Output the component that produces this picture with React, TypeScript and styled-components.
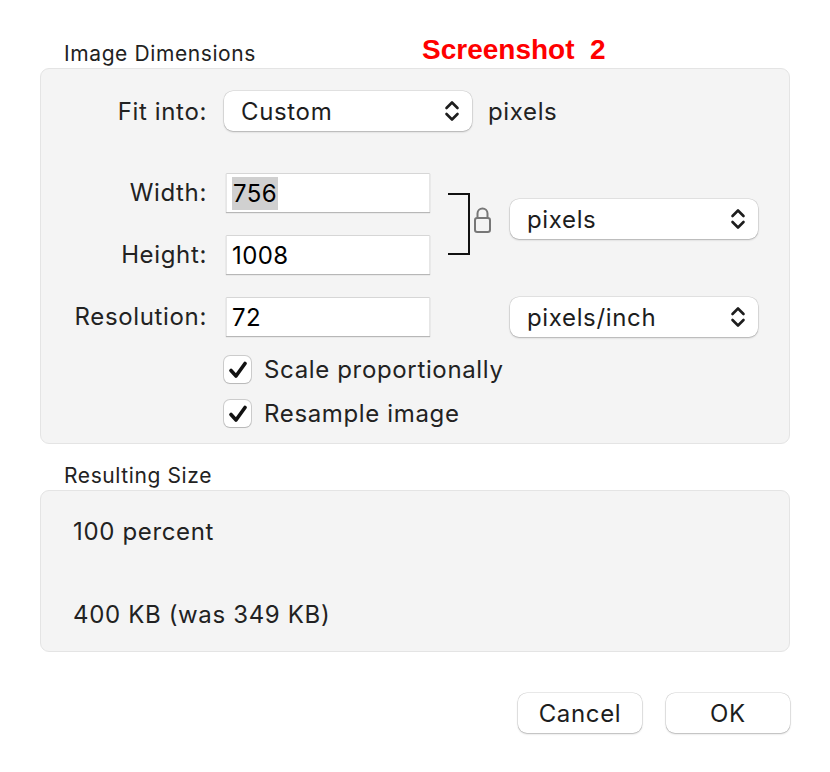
import React from "react";
import styled, { createGlobalStyle } from "styled-components";

const Global = createGlobalStyle`
  html, body { margin: 0; padding: 0; background: #ffffff; }
  body { font-family: Inter, "Noto Sans", sans-serif; color: #222222; }
`;

const Dialog = styled.div`
  width: 830px;
  height: 772px;
  padding: 0 40px;
  box-sizing: border-box;
  display: flex;
  flex-direction: column;
`;

const HeaderRow = styled.div`
  height: 68px;
  display: flex;
  align-items: flex-end;
  position: relative;
`;

const SectionLabel = styled.div`
  font-size: 21px;
  letter-spacing: 0.6px;
  padding-left: 24px;
  padding-bottom: 2px;
  color: #222;
`;

const Caption = styled.div`
  position: absolute;
  left: 382px;
  top: 34px;
  font-family: "Liberation Sans", Arial, sans-serif;
  font-weight: bold;
  font-size: 28px;
  color: #ff0000;
  white-space: pre;
`;

const Panel = styled.div<{ $h: number }>`
  height: ${(p) => p.$h}px;
  box-sizing: border-box;
  background: #f4f4f4;
  border: 1px solid #e4e4e4;
  border-radius: 9px;
`;

const DimPanel = styled(Panel)`
  padding-top: 22px;
  display: flex;
  flex-direction: column;
`;

const FitRow = styled.div`
  display: flex;
  align-items: center;
  height: 40px;
`;

const Label = styled.div`
  width: 166px;
  text-align: right;
  font-size: 24px;
  letter-spacing: 0.65px;
  color: #222;
  flex: none;
`;

const FitGap = styled.div`
  width: 17px;
  flex: none;
`;

const Popup = styled.div<{ $w: number }>`
  width: ${(p) => p.$w}px;
  height: 40px;
  box-sizing: border-box;
  background: #ffffff;
  border-radius: 9px;
  box-shadow: 0 0 0 0.5px rgba(0, 0, 0, 0.14), 0 1px 2px rgba(0, 0, 0, 0.22);
  display: flex;
  align-items: center;
  justify-content: space-between;
  padding: 0 12px 0 17px;
  font-size: 24px;
  letter-spacing: 0.65px;
  color: #1d1d1d;
  flex: none;
`;

const Unit = styled.div`
  margin-left: 16px;
  font-size: 24px;
  letter-spacing: 0.65px;
  color: #222;
`;

const SizeGrid = styled.div`
  margin-top: 42px;
  display: grid;
  grid-template-columns: 166px 17px 206px 80px 248px;
  grid-template-rows: 39px 39px 39px;
  row-gap: 23px;
  align-items: center;
`;

const GridLabel = styled(Label)<{ $row: number }>`
  grid-column: 1;
  grid-row: ${(p) => p.$row};
`;

const Field = styled.div<{ $row: number }>`
  grid-column: 3;
  grid-row: ${(p) => p.$row};
  margin-left: 2px;
  height: 39px;
  box-sizing: border-box;
  background: #ffffff;
  border-top: 1px solid #d6d6d6;
  border-left: 1px solid #e6e6e6;
  border-right: 1px solid #e6e6e6;
  box-shadow: 0 1px 1px rgba(0, 0, 0, 0.25);
  display: flex;
  align-items: center;
  padding-left: 5px;
  font-size: 24px;
  letter-spacing: 0.4px;
  color: #000;
`;

const Selected = styled.span`
  background: #d0d0d0;
  padding: 2px 1px;
`;

const LinkArea = styled.div`
  grid-column: 4;
  grid-row: 1 / 3;
  display: flex;
  align-items: center;
`;

const Bracket = styled.div`
  margin-left: 18px;
  width: 20px;
  height: 58px;
  border: 2px solid #111;
  border-left: none;
`;

const LockIcon = styled.svg`
  margin-left: 3px;
  margin-top: -7px;
`;

const SidePopup = styled.div<{ $row: string; $top: number }>`
  grid-column: 5;
  grid-row: ${(p) => p.$row};
  align-self: start;
  margin-top: ${(p) => p.$top}px;
`;

const Checks = styled.div`
  margin-top: 20px;
  margin-left: 183px;
  display: flex;
  flex-direction: column;
  gap: 17px;
`;

const CheckRow = styled.label`
  display: flex;
  align-items: center;
  gap: 13px;
  font-size: 24px;
  letter-spacing: 0.65px;
  color: #222;
  height: 27px;
`;

const Box = styled.span`
  width: 27px;
  height: 27px;
  box-sizing: border-box;
  border-radius: 6px;
  background: #ffffff;
  box-shadow: 0 0 0 1px rgba(0, 0, 0, 0.16), 0 1px 1px rgba(0, 0, 0, 0.1);
  display: flex;
  align-items: center;
  justify-content: center;
`;

const ResultHeader = styled.div`
  height: 46px;
  display: flex;
  align-items: flex-end;
`;

const ResultPanel = styled(Panel)`
  padding: 0 0 0 32px;
  display: flex;
  flex-direction: column;
`;

const ResultText = styled.div<{ $top: number }>`
  margin-top: ${(p) => p.$top}px;
  font-size: 24px;
  letter-spacing: 0.65px;
  color: #222;
  line-height: 28px;
`;

const Buttons = styled.div`
  margin-top: 41px;
  display: flex;
  justify-content: flex-end;
  gap: 24px;
`;

const Button = styled.button`
  width: 124px;
  height: 40px;
  border: none;
  border-radius: 9px;
  background: #ffffff;
  box-shadow: 0 0 0 0.5px rgba(0, 0, 0, 0.16), 0 1px 2px rgba(0, 0, 0, 0.22);
  font-family: Inter, "Noto Sans", sans-serif;
  font-size: 24px;
  letter-spacing: 0.65px;
  color: #1d1d1d;
  padding: 0;
`;

const Chevrons = () => (
  <svg width="16" height="22" viewBox="0 0 16 22" fill="none">
    <path d="M2.5 8 L8 2.5 L13.5 8" stroke="#1d1d1d" strokeWidth="2.6" strokeLinecap="round" strokeLinejoin="round" />
    <path d="M2.5 14 L8 19.5 L13.5 14" stroke="#1d1d1d" strokeWidth="2.6" strokeLinecap="round" strokeLinejoin="round" />
  </svg>
);

const Check = () => (
  <svg width="20" height="18" viewBox="0 0 20 18" fill="none">
    <path d="M3 9.5 L8 15 L17 2.5" stroke="#111" strokeWidth="3.6" strokeLinecap="round" strokeLinejoin="round" />
  </svg>
);

const Lock = () => (
  <LockIcon width="19" height="28" viewBox="0 0 19 28">
    <path d="M4.5 12 V7.5 A5 5 0 0 1 14.5 7.5 V12" fill="none" stroke="#777" strokeWidth="2" />
    <rect x="2" y="12" width="15" height="14" rx="2.2" fill="none" stroke="#777" strokeWidth="2" />
  </LockIcon>
);

export default function App() {
  return (
    <>
      <Global />
      <Dialog>
        <HeaderRow>
          <SectionLabel>Image Dimensions</SectionLabel>
          <Caption>{"Screenshot  2"}</Caption>
        </HeaderRow>
        <DimPanel $h={376}>
          <FitRow>
            <Label>Fit into:</Label>
            <FitGap />
            <Popup $w={248}>
              <span>Custom</span>
              <Chevrons />
            </Popup>
            <Unit>pixels</Unit>
          </FitRow>
          <SizeGrid>
            <GridLabel $row={1}>Width:</GridLabel>
            <Field $row={1}>
              <Selected>756</Selected>
            </Field>
            <GridLabel $row={2}>Height:</GridLabel>
            <Field $row={2}>1008</Field>
            <LinkArea>
              <Bracket />
              <Lock />
            </LinkArea>
            <SidePopup $row="1 / 3" $top={26}>
              <Popup $w={248}>
                <span>pixels</span>
                <Chevrons />
              </Popup>
            </SidePopup>
            <GridLabel $row={3}>Resolution:</GridLabel>
            <Field $row={3}>72</Field>
            <SidePopup $row="3" $top={0}>
              <Popup $w={248}>
                <span>pixels/inch</span>
                <Chevrons />
              </Popup>
            </SidePopup>
          </SizeGrid>
          <Checks>
            <CheckRow>
              <Box>
                <Check />
              </Box>
              Scale proportionally
            </CheckRow>
            <CheckRow>
              <Box>
                <Check />
              </Box>
              Resample image
            </CheckRow>
          </Checks>
        </DimPanel>
        <ResultHeader>
          <SectionLabel>Resulting Size</SectionLabel>
        </ResultHeader>
        <ResultPanel $h={162}>
          <ResultText $top={27}>100 percent</ResultText>
          <ResultText $top={55}>400 KB (was 349 KB)</ResultText>
        </ResultPanel>
        <Buttons>
          <Button>Cancel</Button>
          <Button>OK</Button>
        </Buttons>
      </Dialog>
    </>
  );
}
